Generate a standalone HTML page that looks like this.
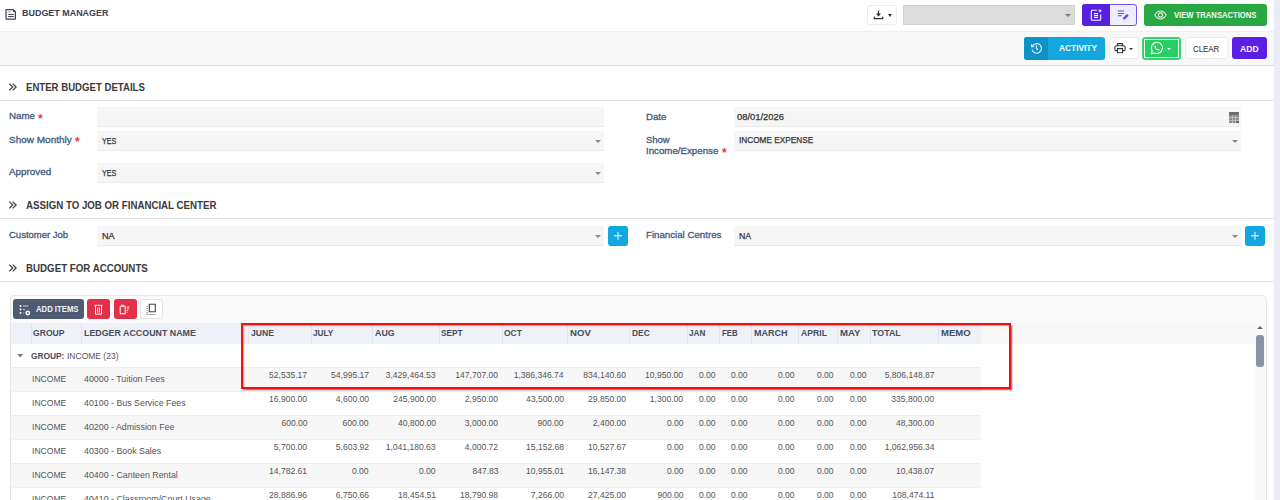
<!DOCTYPE html>
<html><head><meta charset="utf-8"><style>
*{box-sizing:border-box;margin:0;padding:0}
html,body{width:1280px;height:500px;overflow:hidden;background:#fff;font-family:"Liberation Sans",sans-serif;}
.a{position:absolute}
.t{line-height:20px;white-space:nowrap}
.box{position:absolute;border-radius:3px}
.hr{position:absolute;left:0;width:1274px;height:1px;background:#e4e4e4}
.inp{position:absolute;background:#f6f6f6;border-bottom:1px solid #ebebeb}
</style></head><body>
<div class="a" style="left:1274px;top:0;width:6px;height:500px;background:#ebebf5"></div>
<div class="a" style="left:0;top:31px;width:1274px;height:35px;background:#f8f8f8;border-top:1px solid #f0f0f0;border-bottom:1px solid #dcdcdc"></div>
<svg class="a" style="left:2px;top:5px" width="20" height="18" viewBox="2 5 20 18"><path d="M6 9.6H13.3L15.4 11.7V18.5a.7.7 0 0 1-.7.7H6.7a.7.7 0 0 1-.7-.7z" fill="none" stroke="#3d4354" stroke-width="1.2" stroke-linejoin="round"/><path d="M13 9.3L15.7 12H13z" fill="#3d4354"/><path d="M8.2 11.9h2.6" stroke="#9aa0ab" stroke-width="1"/><path d="M8.2 14.4h5.6M8.2 16.5h5.6" stroke="#3d4354" stroke-width="1"/></svg>
<div class="a t" style="left:21.50px;top:2.80px;font-size:9.30px;color:#3d4354;font-weight:bold;transform:scaleX(0.9620);transform-origin:0 50%;">BUDGET MANAGER</div>
<div class="box" style="left:867px;top:5px;width:30px;height:20px;background:#fff;border:1px solid #ebebeb"></div>
<svg class="a" style="left:873px;top:10px" width="11" height="10" viewBox="0 0 11 10"><path d="M5.5 0.6v5.4" stroke="#333" stroke-width="1.3"/><path d="M3 3.6l2.5 2.8 2.5-2.8z" fill="#333"/><path d="M1.3 6.8v1.9h8.4V6.8" fill="none" stroke="#333" stroke-width="1.3"/></svg>
<div class="a" style="left:888px;top:14px;width:0;height:0;border-left:2.7px solid transparent;border-right:2.7px solid transparent;border-top:3px solid #333"></div>
<div class="a" style="left:903px;top:5px;width:172px;height:20px;background:#dcdcdc;border:1px solid #d2d2d2"></div>
<div class="a" style="left:1065.3px;top:13.8px;width:0;height:0;border-left:3.2px solid transparent;border-right:3.2px solid transparent;border-top:3.6px solid #7a7a7a"></div>
<div class="box" style="left:1082px;top:4px;width:55px;height:22px;background:#efecfc;border:1px solid #7452ef"></div>
<div class="box" style="left:1082px;top:4px;width:28px;height:22px;background:#5620e2;border-radius:3px 0 0 3px"></div>
<svg class="a" style="left:1090px;top:8.6px" width="13" height="12" viewBox="0 0 13 12"><path d="M6.8 1.3H2.2a.9.9 0 0 0-.9.9v8.2a.9.9 0 0 0 .9.9h7.6a.9.9 0 0 0 .9-.9V5.6" fill="none" stroke="#fff" stroke-width="1.1"/><path d="M4 4.6h4M4 6.6h4M4 8.5h4" stroke="#fff" stroke-width="1.1"/><path d="M10 .3v3M8.5 1.8h3" stroke="#fff" stroke-width="1"/></svg>
<svg class="a" style="left:1117px;top:10px" width="12" height="10" viewBox="0 0 12 10"><path d="M1 1h6M1 3.5h6M1 5.8h4" stroke="#6a43ee" stroke-width="1.1"/><path d="M7.2 8.4l3-3" stroke="#6a43ee" stroke-width="2.3" stroke-linecap="round"/></svg>
<div class="box" style="left:1144px;top:4px;width:123px;height:22px;background:#27a843"></div>
<svg class="a" style="left:1154px;top:10px" width="13" height="10" viewBox="0 0 13 10"><path d="M.8 5C2.5 2.1 4.4 1 6.5 1s4 1.1 5.7 4c-1.7 2.9-3.6 4-5.7 4S2.5 7.9.8 5z" fill="none" stroke="#e6f5e9" stroke-width="1.1"/><circle cx="6.5" cy="5" r="2.1" fill="none" stroke="#e6f5e9" stroke-width="1.1"/></svg>
<div class="a t" style="left:1174.00px;top:4.80px;font-size:9.01px;color:#f2faf3;font-weight:bold;transform:scaleX(0.8494);transform-origin:0 50%;">VIEW TRANSACTIONS</div>
<div class="box" style="left:1024px;top:37px;width:81px;height:23px;background:#12a7de"></div>
<div class="box" style="left:1024px;top:37px;width:24px;height:23px;background:#0f93c6;border-radius:3px 0 0 3px"></div>
<svg class="a" style="left:1030px;top:42px" width="13" height="12" viewBox="0 0 13 12"><path d="M2.4 4.2A4.8 4.8 0 1 1 2 7.6" fill="none" stroke="#e8f6fb" stroke-width="1.1"/><path d="M1.6 2.2v2.6h2.6" fill="none" stroke="#e8f6fb" stroke-width="1.1"/><path d="M6.4 3.6v2.6l1.6 1.6" fill="none" stroke="#e8f6fb" stroke-width="1.1"/></svg>
<div class="a t" style="left:1059.00px;top:38.00px;font-size:8.72px;color:#f4fbfe;font-weight:bold;transform:scaleX(0.9565);transform-origin:0 50%;">ACTIVITY</div>
<div class="box" style="left:1109px;top:37px;width:30px;height:22px;background:#fff;border:1px solid #ececec"></div>
<svg class="a" style="left:1114px;top:42px" width="12" height="12" viewBox="0 0 12 12"><path d="M3.4 3.6V1.6h5.2v2" fill="none" stroke="#333" stroke-width="1.05"/><path d="M3.2 8.6H1.8a.9.9 0 0 1-.9-.9V5a1.3 1.3 0 0 1 1.3-1.3h7.6A1.3 1.3 0 0 1 11.1 5v2.7a.9.9 0 0 1-.9.9H8.8" fill="none" stroke="#333" stroke-width="1.05"/><path d="M3.4 6.6h5.2v4.2H3.4z" fill="none" stroke="#333" stroke-width="1.05"/></svg>
<div class="a" style="left:1129.2px;top:47.6px;width:0;height:0;border-left:2.4px solid transparent;border-right:2.4px solid transparent;border-top:2.7px solid #333"></div>
<div class="box" style="left:1142px;top:37px;width:39px;height:23px;background:#25d366;border:1.5px solid #41d978;border-radius:3px"></div>
<div class="a" style="left:1144px;top:39px;width:35px;height:19px;border:1px solid #f2fff6;background:#27cf63"></div>
<svg class="a" style="left:1150px;top:41px" width="14" height="14" viewBox="0 0 14 14"><path d="M7 1.3a5.6 5.6 0 0 0-4.8 8.5L1.4 12.7l3-.8A5.6 5.6 0 1 0 7 1.3z" fill="none" stroke="#fff" stroke-width="1.1"/><path d="M5 4.4c-.4.3-.7.8-.5 1.5.4 1.4 1.9 3 3.4 3.6.7.3 1.3 0 1.6-.4l-.2-.7-1.1-.5-.5.5c-.8-.3-1.6-1.1-1.9-1.9l.5-.5-.4-1.1z" fill="#fff"/></svg>
<div class="a" style="left:1167.3px;top:47.8px;width:0;height:0;border-left:2.4px solid transparent;border-right:2.4px solid transparent;border-top:2.7px solid #fff"></div>
<div class="box" style="left:1185px;top:37px;width:43px;height:22px;background:#fff;border:1px solid #ececec"></div>
<div class="a t" style="left:1193.00px;top:38.60px;font-size:9.01px;color:#3d3d3d;font-weight:normal;transform:scaleX(0.8752);transform-origin:0 50%;-webkit-text-stroke:0.1px #3d3d3d">CLEAR</div>
<div class="box" style="left:1232px;top:37px;width:35px;height:22px;background:#5a1fe2"></div>
<div class="a t" style="left:1240.00px;top:38.60px;font-size:9.01px;color:#f5f1fe;font-weight:bold;transform:scaleX(0.9578);transform-origin:0 50%;">ADD</div>
<svg class="a" style="left:0;top:77.2px" width="30" height="20" viewBox="0 77.2 30 20"><path d="M9.3 83.8L12.7 87.2L9.3 90.60000000000001M12.7 83.8L16.1 87.2L12.7 90.60000000000001" fill="none" stroke="#3d3d3d" stroke-width="1.25"/></svg>
<div class="a t" style="left:26.00px;top:78.00px;font-size:10.03px;color:#3a3a3a;font-weight:bold;transform:scaleX(0.9592);transform-origin:0 50%;">ENTER BUDGET DETAILS</div>
<div class="hr" style="top:100px"></div>
<svg class="a" style="left:0;top:194.8px" width="30" height="20" viewBox="0 194.8 30 20"><path d="M9.3 201.4L12.7 204.8L9.3 208.20000000000002M12.7 201.4L16.1 204.8L12.7 208.20000000000002" fill="none" stroke="#3d3d3d" stroke-width="1.25"/></svg>
<div class="a t" style="left:26.00px;top:195.60px;font-size:10.03px;color:#3a3a3a;font-weight:bold;transform:scaleX(0.9686);transform-origin:0 50%;">ASSIGN TO JOB OR FINANCIAL CENTER</div>
<div class="hr" style="top:218px"></div>
<svg class="a" style="left:0;top:257.9px" width="30" height="20" viewBox="0 257.9 30 20"><path d="M9.3 264.5L12.7 267.9L9.3 271.29999999999995M12.7 264.5L16.1 267.9L12.7 271.29999999999995" fill="none" stroke="#3d3d3d" stroke-width="1.25"/></svg>
<div class="a t" style="left:26.00px;top:258.70px;font-size:10.03px;color:#3a3a3a;font-weight:bold;transform:scaleX(0.9718);transform-origin:0 50%;">BUDGET FOR ACCOUNTS</div>
<div class="hr" style="top:281px"></div>
<div class="a t" style="left:9.00px;top:106.40px;font-size:9.74px;color:#405a80;font-weight:normal;transform:scaleX(1.0009);transform-origin:0 50%;-webkit-text-stroke:0.3px #405a80">Name</div>
<div class="a t" style="left:38px;top:108.50px;font-size:12px;color:#e3374b;font-weight:bold">*</div>
<div class="inp" style="left:97px;top:107px;width:507px;height:20px"></div>
<div class="a t" style="left:9.00px;top:129.80px;font-size:9.74px;color:#405a80;font-weight:normal;transform:scaleX(1.0268);transform-origin:0 50%;-webkit-text-stroke:0.3px #405a80">Show Monthly</div>
<div class="a t" style="left:75px;top:131.80px;font-size:12px;color:#e3374b;font-weight:bold">*</div>
<div class="inp" style="left:97px;top:131px;width:507px;height:20px"></div>
<div class="a" style="left:595px;top:139.5px;width:0;height:0;border-left:3.5px solid transparent;border-right:3.5px solid transparent;border-top:3.5px solid #888"></div>
<div class="a t" style="left:101.80px;top:130.50px;font-size:8.72px;color:#333;font-weight:normal;transform:scaleX(0.8251);transform-origin:0 50%;-webkit-text-stroke:0.25px #333">YES</div>
<div class="a t" style="left:9.00px;top:162.00px;font-size:9.74px;color:#405a80;font-weight:normal;transform:scaleX(1.0124);transform-origin:0 50%;-webkit-text-stroke:0.3px #405a80">Approved</div>
<div class="inp" style="left:97px;top:163px;width:507px;height:20px"></div>
<div class="a" style="left:595px;top:171.5px;width:0;height:0;border-left:3.5px solid transparent;border-right:3.5px solid transparent;border-top:3.5px solid #888"></div>
<div class="a t" style="left:101.80px;top:162.80px;font-size:8.72px;color:#333;font-weight:normal;transform:scaleX(0.8251);transform-origin:0 50%;-webkit-text-stroke:0.25px #333">YES</div>
<div class="a t" style="left:646.00px;top:106.50px;font-size:9.74px;color:#405a80;font-weight:normal;transform:scaleX(0.9918);transform-origin:0 50%;-webkit-text-stroke:0.3px #405a80">Date</div>
<div class="inp" style="left:734px;top:107px;width:507px;height:20px"></div>
<div class="a t" style="left:736.50px;top:107.20px;font-size:9.01px;color:#333;font-weight:normal;transform:scaleX(1.0422);transform-origin:0 50%;-webkit-text-stroke:0.25px #333">08/01/2026</div>
<svg class="a" style="left:1229px;top:112px" width="10" height="11" viewBox="0 0 10 11"><rect x="0" y="0" width="10" height="11" fill="#8a8a8a"/><rect x="0" y="0" width="10" height="3" fill="#6e6e6e"/><path d="M0 5.5h10M0 8.5h10M3.5 3v8M6.5 3v8" stroke="#c8c8c8" stroke-width="0.8"/><rect x="7" y="9" width="3" height="2" fill="#666"/></svg>
<div class="a t" style="left:646.00px;top:129.70px;font-size:9.74px;color:#405a80;font-weight:normal;transform:scaleX(0.9729);transform-origin:0 50%;-webkit-text-stroke:0.3px #405a80">Show</div>
<div class="a t" style="left:646.00px;top:141.00px;font-size:9.74px;color:#405a80;font-weight:normal;transform:scaleX(0.9968);transform-origin:0 50%;-webkit-text-stroke:0.3px #405a80">Income/Expense</div>
<div class="a t" style="left:722px;top:143.00px;font-size:12px;color:#e3374b;font-weight:bold">*</div>
<div class="inp" style="left:734px;top:131px;width:507px;height:20px"></div>
<div class="a" style="left:1232px;top:139.5px;width:0;height:0;border-left:3.5px solid transparent;border-right:3.5px solid transparent;border-top:3.5px solid #888"></div>
<div class="a t" style="left:738.80px;top:130.20px;font-size:8.72px;color:#333;font-weight:normal;transform:scaleX(0.9451);transform-origin:0 50%;-webkit-text-stroke:0.25px #333">INCOME EXPENSE</div>
<div class="a t" style="left:9.20px;top:224.70px;font-size:9.74px;color:#405a80;font-weight:normal;transform:scaleX(0.9750);transform-origin:0 50%;-webkit-text-stroke:0.3px #405a80">Customer Job</div>
<div class="inp" style="left:97px;top:226px;width:507px;height:20px"></div>
<div class="a" style="left:595px;top:234.5px;width:0;height:0;border-left:3.5px solid transparent;border-right:3.5px solid transparent;border-top:3.5px solid #888"></div>
<div class="a t" style="left:101.50px;top:226.00px;font-size:8.72px;color:#333;font-weight:normal;transform:scaleX(1.0483);transform-origin:0 50%;-webkit-text-stroke:0.25px #333">NA</div>
<div class="a t" style="left:646.10px;top:224.70px;font-size:9.74px;color:#405a80;font-weight:normal;transform:scaleX(0.9951);transform-origin:0 50%;-webkit-text-stroke:0.3px #405a80">Financial Centres</div>
<div class="inp" style="left:734px;top:226px;width:507px;height:20px"></div>
<div class="a" style="left:1232px;top:234.5px;width:0;height:0;border-left:3.5px solid transparent;border-right:3.5px solid transparent;border-top:3.5px solid #888"></div>
<div class="a t" style="left:738.90px;top:226.00px;font-size:8.72px;color:#333;font-weight:normal;transform:scaleX(1.0070);transform-origin:0 50%;-webkit-text-stroke:0.25px #333">NA</div>
<div class="box" style="left:608px;top:226px;width:20px;height:20px;background:#12a7e0"></div>
<svg class="a" style="left:608px;top:226px" width="20" height="20" viewBox="0 0 20 20"><path d="M10 5.8v8M6 9.8h8" stroke="#fff" stroke-width="1"/></svg>
<div class="box" style="left:1245px;top:226px;width:20px;height:20px;background:#12a7e0"></div>
<svg class="a" style="left:1245px;top:226px" width="20" height="20" viewBox="0 0 20 20"><path d="M10 5.8v8M6 9.8h8" stroke="#fff" stroke-width="1"/></svg>
<div class="a" style="left:10px;top:295px;width:1257px;height:230px;background:#fff;border:1px solid #e6e6e6;border-radius:4px"></div>
<div class="a" style="left:11px;top:296px;width:1255px;height:27px;background:#fafafa;border-radius:4px 4px 0 0"></div>
<div class="a" style="left:981px;top:323px;width:285px;height:21px;background:#f8f8f8"></div>
<div class="a" style="left:1255px;top:323px;width:11px;height:190px;background:#f8f8f8"></div>
<div class="a" style="left:1256px;top:335px;width:8px;height:32px;background:#8992a6;border-radius:3px"></div>
<div class="a" style="left:1257px;top:326px;width:0;height:0;border-left:3px solid transparent;border-right:3px solid transparent;border-bottom:3.5px solid #666"></div>
<div class="box" style="left:13px;top:299px;width:71px;height:20px;background:#4f5b73"></div>
<svg class="a" style="left:18px;top:303px" width="14" height="13" viewBox="0 0 14 13"><g fill="#fff"><circle cx="2.5" cy="3" r="1"/><circle cx="2.5" cy="6.6" r="1"/><circle cx="2.5" cy="10" r="1"/></g><path d="M5 3h5.5M5 6.6h2M5 10h.6" stroke="#e8eaef" stroke-width="0.8"/><circle cx="9.8" cy="10" r="2.4" fill="#fff"/><circle cx="9.8" cy="10" r="0.9" fill="#4f5b73"/></svg>
<div class="a t" style="left:35.70px;top:299.20px;font-size:8.43px;color:#f3f4f6;font-weight:bold;transform:scaleX(0.9166);transform-origin:0 50%;">ADD ITEMS</div>
<div class="box" style="left:87px;top:299px;width:23px;height:20px;background:#e3304a"></div>
<svg class="a" style="left:94px;top:304px" width="9" height="11" viewBox="0 0 9 11"><path d="M.5 1.3h8" stroke="#fff" stroke-width="1"/><path d="M1.5 1.6v8.6h6V1.6" fill="none" stroke="#fff" stroke-width="1"/><path d="M3.6 3.5v5M5.4 3.5v5" stroke="#fff" stroke-width="1"/></svg>
<div class="box" style="left:114px;top:299px;width:23px;height:20px;background:#e3304a"></div>
<svg class="a" style="left:119px;top:304px" width="12" height="11" viewBox="0 0 12 11"><path d="M1.2 2.2h5v7.6h-5z" fill="none" stroke="#fff" stroke-width="1"/><path d="M2.6 1.2h2.2" stroke="#fff" stroke-width="1"/><path d="M7.8 3h2.6M7.8 4.8h2M7.8 6.6h1.4M7.8 8.4h.8" stroke="#fff" stroke-width=".9"/></svg>
<div class="box" style="left:140px;top:299px;width:23px;height:20px;background:#fff;border:1px solid #e4e4e4"></div>
<svg class="a" style="left:145px;top:303px" width="13" height="13" viewBox="0 0 13 13"><path d="M4.3 1.3h6v7.4h-6z" fill="none" stroke="#444" stroke-width="1.1"/><g fill="#666"><rect x="1.6" y="3" width="1" height="1"/><rect x="1.6" y="5" width="1" height="1"/><rect x="1.6" y="7" width="1" height="1"/><rect x="1.6" y="9" width="1" height="1"/><rect x="1.6" y="11" width="1" height="1"/><rect x="3.6" y="11" width="1" height="1"/><rect x="5.6" y="11" width="1" height="1"/><rect x="7.6" y="11" width="1" height="1"/><rect x="9.6" y="11" width="1" height="1"/></g></svg>
<div class="a" style="left:11px;top:323px;width:970px;height:21px;background:#eef1f7"></div>
<div class="a" style="left:30.5px;top:323px;width:1px;height:21px;background:#e0e4ec"></div>
<div class="a t" style="left:33.30px;top:323.30px;font-size:9.45px;color:#474d5c;font-weight:bold;transform:scaleX(0.9107);transform-origin:0 50%;">GROUP</div>
<div class="a" style="left:81.3px;top:323px;width:1px;height:21px;background:#e0e4ec"></div>
<div class="a t" style="left:84.00px;top:323.30px;font-size:9.45px;color:#474d5c;font-weight:bold;transform:scaleX(0.9387);transform-origin:0 50%;">LEDGER ACCOUNT NAME</div>
<div class="a" style="left:247.7px;top:323px;width:1px;height:21px;background:#e0e4ec"></div>
<div class="a t" style="left:250.80px;top:323.30px;font-size:9.45px;color:#474d5c;font-weight:bold;transform:scaleX(0.9107);transform-origin:0 50%;">JUNE</div>
<div class="a" style="left:310.6px;top:323px;width:1px;height:21px;background:#e0e4ec"></div>
<div class="a t" style="left:313.10px;top:323.30px;font-size:9.45px;color:#474d5c;font-weight:bold;transform:scaleX(0.8719);transform-origin:0 50%;">JULY</div>
<div class="a" style="left:372.4px;top:323px;width:1px;height:21px;background:#e0e4ec"></div>
<div class="a t" style="left:374.70px;top:323.30px;font-size:9.45px;color:#474d5c;font-weight:bold;transform:scaleX(0.9383);transform-origin:0 50%;">AUG</div>
<div class="a" style="left:439.2px;top:323px;width:1px;height:21px;background:#e0e4ec"></div>
<div class="a t" style="left:441.25px;top:323.30px;font-size:9.45px;color:#474d5c;font-weight:bold;transform:scaleX(0.8733);transform-origin:0 50%;">SEPT</div>
<div class="a" style="left:501.8px;top:323px;width:1px;height:21px;background:#e0e4ec"></div>
<div class="a t" style="left:503.75px;top:323.30px;font-size:9.45px;color:#474d5c;font-weight:bold;transform:scaleX(0.8951);transform-origin:0 50%;">OCT</div>
<div class="a" style="left:567.3px;top:323px;width:1px;height:21px;background:#e0e4ec"></div>
<div class="a t" style="left:570.00px;top:323.30px;font-size:9.45px;color:#474d5c;font-weight:bold;transform:scaleX(1.0208);transform-origin:0 50%;">NOV</div>
<div class="a" style="left:629.4px;top:323px;width:1px;height:21px;background:#e0e4ec"></div>
<div class="a t" style="left:632.20px;top:323.30px;font-size:9.45px;color:#474d5c;font-weight:bold;transform:scaleX(0.8923);transform-origin:0 50%;">DEC</div>
<div class="a" style="left:687.0px;top:323px;width:1px;height:21px;background:#e0e4ec"></div>
<div class="a t" style="left:689.20px;top:323.30px;font-size:9.45px;color:#474d5c;font-weight:bold;transform:scaleX(0.8677);transform-origin:0 50%;">JAN</div>
<div class="a" style="left:718.7px;top:323px;width:1px;height:21px;background:#e0e4ec"></div>
<div class="a t" style="left:721.50px;top:323.30px;font-size:9.45px;color:#474d5c;font-weight:bold;transform:scaleX(0.8256);transform-origin:0 50%;">FEB</div>
<div class="a" style="left:750.6px;top:323px;width:1px;height:21px;background:#e0e4ec"></div>
<div class="a t" style="left:753.50px;top:323.30px;font-size:9.45px;color:#474d5c;font-weight:bold;transform:scaleX(0.9556);transform-origin:0 50%;">MARCH</div>
<div class="a" style="left:797.8px;top:323px;width:1px;height:21px;background:#e0e4ec"></div>
<div class="a t" style="left:800.50px;top:323.30px;font-size:9.45px;color:#474d5c;font-weight:bold;transform:scaleX(0.9173);transform-origin:0 50%;">APRIL</div>
<div class="a" style="left:837.3px;top:323px;width:1px;height:21px;background:#e0e4ec"></div>
<div class="a t" style="left:839.60px;top:323.30px;font-size:9.45px;color:#474d5c;font-weight:bold;transform:scaleX(1.0185);transform-origin:0 50%;">MAY</div>
<div class="a" style="left:869.6px;top:323px;width:1px;height:21px;background:#e0e4ec"></div>
<div class="a t" style="left:871.90px;top:323.30px;font-size:9.45px;color:#474d5c;font-weight:bold;transform:scaleX(0.9376);transform-origin:0 50%;">TOTAL</div>
<div class="a" style="left:938.0px;top:323px;width:1px;height:21px;background:#e0e4ec"></div>
<div class="a t" style="left:941.30px;top:323.30px;font-size:9.45px;color:#474d5c;font-weight:bold;transform:scaleX(1.0072);transform-origin:0 50%;">MEMO</div>
<svg class="a" style="left:10px;top:345px" width="20" height="20" viewBox="10 345 20 20"><path d="M17.2 353.9H23.2L20.2 357.4z" fill="#7a7a7a"/></svg>
<div class="a t" style="left:30.60px;top:346.10px;font-size:8.72px;color:#474d5c;font-weight:bold;transform:scaleX(0.9546);transform-origin:0 50%;">GROUP:</div>
<div class="a t" style="left:66.70px;top:346.10px;font-size:8.72px;color:#555;font-weight:normal;transform:scaleX(0.9751);transform-origin:0 50%;">INCOME (23)</div>
<div class="a" style="left:11px;top:367px;width:970px;height:24px;background:#f7f7f7;border-top:1px solid #efefef"></div>
<div class="a t" style="left:32.40px;top:369.00px;font-size:9.01px;color:#555;font-weight:normal;transform:scaleX(0.9515);transform-origin:0 50%;">INCOME</div>
<div class="a t" style="left:83.50px;top:369.00px;font-size:9.16px;color:#555;font-weight:normal;transform:scaleX(0.9650);transform-origin:0 50%;">40000 - Tuition Fees</div>
<div class="a t" style="left:267.01px;top:365.00px;width:40.09px;text-align:right;font-size:9.01px;color:#555;font-weight:normal;transform:scaleX(0.9500);transform-origin:100% 50%;">52,535.17</div>
<div class="a t" style="left:328.81px;top:365.00px;width:40.09px;text-align:right;font-size:9.01px;color:#555;font-weight:normal;transform:scaleX(0.9500);transform-origin:100% 50%;">54,995.17</div>
<div class="a t" style="left:383.09px;top:365.00px;width:52.61px;text-align:right;font-size:9.01px;color:#555;font-weight:normal;transform:scaleX(0.9500);transform-origin:100% 50%;">3,429,464.53</div>
<div class="a t" style="left:453.20px;top:365.00px;width:45.10px;text-align:right;font-size:9.01px;color:#555;font-weight:normal;transform:scaleX(0.9500);transform-origin:100% 50%;">147,707.00</div>
<div class="a t" style="left:511.19px;top:365.00px;width:52.61px;text-align:right;font-size:9.01px;color:#555;font-weight:normal;transform:scaleX(0.9500);transform-origin:100% 50%;">1,386,346.74</div>
<div class="a t" style="left:580.80px;top:365.00px;width:45.10px;text-align:right;font-size:9.01px;color:#555;font-weight:normal;transform:scaleX(0.9500);transform-origin:100% 50%;">834,140.60</div>
<div class="a t" style="left:643.41px;top:365.00px;width:40.09px;text-align:right;font-size:9.01px;color:#555;font-weight:normal;transform:scaleX(0.9500);transform-origin:100% 50%;">10,950.00</div>
<div class="a t" style="left:697.66px;top:365.00px;width:17.54px;text-align:right;font-size:9.01px;color:#555;font-weight:normal;transform:scaleX(0.9500);transform-origin:100% 50%;">0.00</div>
<div class="a t" style="left:729.56px;top:365.00px;width:17.54px;text-align:right;font-size:9.01px;color:#555;font-weight:normal;transform:scaleX(0.9500);transform-origin:100% 50%;">0.00</div>
<div class="a t" style="left:776.76px;top:365.00px;width:17.54px;text-align:right;font-size:9.01px;color:#555;font-weight:normal;transform:scaleX(0.9500);transform-origin:100% 50%;">0.00</div>
<div class="a t" style="left:816.26px;top:365.00px;width:17.54px;text-align:right;font-size:9.01px;color:#555;font-weight:normal;transform:scaleX(0.9500);transform-origin:100% 50%;">0.00</div>
<div class="a t" style="left:848.56px;top:365.00px;width:17.54px;text-align:right;font-size:9.01px;color:#555;font-weight:normal;transform:scaleX(0.9500);transform-origin:100% 50%;">0.00</div>
<div class="a t" style="left:881.89px;top:365.00px;width:52.61px;text-align:right;font-size:9.01px;color:#555;font-weight:normal;transform:scaleX(0.9500);transform-origin:100% 50%;">5,806,148.87</div>
<div class="a" style="left:11px;top:391px;width:970px;height:24px;background:#fff;border-top:1px solid #efefef"></div>
<div class="a t" style="left:32.40px;top:393.00px;font-size:9.01px;color:#555;font-weight:normal;transform:scaleX(0.9515);transform-origin:0 50%;">INCOME</div>
<div class="a t" style="left:83.50px;top:393.00px;font-size:9.16px;color:#555;font-weight:normal;transform:scaleX(0.9650);transform-origin:0 50%;">40100 - Bus Service Fees</div>
<div class="a t" style="left:267.01px;top:389.00px;width:40.09px;text-align:right;font-size:9.01px;color:#555;font-weight:normal;transform:scaleX(0.9500);transform-origin:100% 50%;">16,900.00</div>
<div class="a t" style="left:333.83px;top:389.00px;width:35.07px;text-align:right;font-size:9.01px;color:#555;font-weight:normal;transform:scaleX(0.9500);transform-origin:100% 50%;">4,600.00</div>
<div class="a t" style="left:390.60px;top:389.00px;width:45.10px;text-align:right;font-size:9.01px;color:#555;font-weight:normal;transform:scaleX(0.9500);transform-origin:100% 50%;">245,900.00</div>
<div class="a t" style="left:463.23px;top:389.00px;width:35.07px;text-align:right;font-size:9.01px;color:#555;font-weight:normal;transform:scaleX(0.9500);transform-origin:100% 50%;">2,950.00</div>
<div class="a t" style="left:523.71px;top:389.00px;width:40.09px;text-align:right;font-size:9.01px;color:#555;font-weight:normal;transform:scaleX(0.9500);transform-origin:100% 50%;">43,500.00</div>
<div class="a t" style="left:585.81px;top:389.00px;width:40.09px;text-align:right;font-size:9.01px;color:#555;font-weight:normal;transform:scaleX(0.9500);transform-origin:100% 50%;">29,850.00</div>
<div class="a t" style="left:648.43px;top:389.00px;width:35.07px;text-align:right;font-size:9.01px;color:#555;font-weight:normal;transform:scaleX(0.9500);transform-origin:100% 50%;">1,300.00</div>
<div class="a t" style="left:697.66px;top:389.00px;width:17.54px;text-align:right;font-size:9.01px;color:#555;font-weight:normal;transform:scaleX(0.9500);transform-origin:100% 50%;">0.00</div>
<div class="a t" style="left:729.56px;top:389.00px;width:17.54px;text-align:right;font-size:9.01px;color:#555;font-weight:normal;transform:scaleX(0.9500);transform-origin:100% 50%;">0.00</div>
<div class="a t" style="left:776.76px;top:389.00px;width:17.54px;text-align:right;font-size:9.01px;color:#555;font-weight:normal;transform:scaleX(0.9500);transform-origin:100% 50%;">0.00</div>
<div class="a t" style="left:816.26px;top:389.00px;width:17.54px;text-align:right;font-size:9.01px;color:#555;font-weight:normal;transform:scaleX(0.9500);transform-origin:100% 50%;">0.00</div>
<div class="a t" style="left:848.56px;top:389.00px;width:17.54px;text-align:right;font-size:9.01px;color:#555;font-weight:normal;transform:scaleX(0.9500);transform-origin:100% 50%;">0.00</div>
<div class="a t" style="left:889.40px;top:389.00px;width:45.10px;text-align:right;font-size:9.01px;color:#555;font-weight:normal;transform:scaleX(0.9500);transform-origin:100% 50%;">335,800.00</div>
<div class="a" style="left:11px;top:415px;width:970px;height:24px;background:#f7f7f7;border-top:1px solid #efefef"></div>
<div class="a t" style="left:32.40px;top:417.00px;font-size:9.01px;color:#555;font-weight:normal;transform:scaleX(0.9515);transform-origin:0 50%;">INCOME</div>
<div class="a t" style="left:83.50px;top:417.00px;font-size:9.16px;color:#555;font-weight:normal;transform:scaleX(0.9650);transform-origin:0 50%;">40200 - Admission Fee</div>
<div class="a t" style="left:279.54px;top:413.00px;width:27.56px;text-align:right;font-size:9.01px;color:#555;font-weight:normal;transform:scaleX(0.9500);transform-origin:100% 50%;">600.00</div>
<div class="a t" style="left:341.34px;top:413.00px;width:27.56px;text-align:right;font-size:9.01px;color:#555;font-weight:normal;transform:scaleX(0.9500);transform-origin:100% 50%;">600.00</div>
<div class="a t" style="left:395.61px;top:413.00px;width:40.09px;text-align:right;font-size:9.01px;color:#555;font-weight:normal;transform:scaleX(0.9500);transform-origin:100% 50%;">40,800.00</div>
<div class="a t" style="left:463.23px;top:413.00px;width:35.07px;text-align:right;font-size:9.01px;color:#555;font-weight:normal;transform:scaleX(0.9500);transform-origin:100% 50%;">3,000.00</div>
<div class="a t" style="left:536.24px;top:413.00px;width:27.56px;text-align:right;font-size:9.01px;color:#555;font-weight:normal;transform:scaleX(0.9500);transform-origin:100% 50%;">900.00</div>
<div class="a t" style="left:590.83px;top:413.00px;width:35.07px;text-align:right;font-size:9.01px;color:#555;font-weight:normal;transform:scaleX(0.9500);transform-origin:100% 50%;">2,400.00</div>
<div class="a t" style="left:665.96px;top:413.00px;width:17.54px;text-align:right;font-size:9.01px;color:#555;font-weight:normal;transform:scaleX(0.9500);transform-origin:100% 50%;">0.00</div>
<div class="a t" style="left:697.66px;top:413.00px;width:17.54px;text-align:right;font-size:9.01px;color:#555;font-weight:normal;transform:scaleX(0.9500);transform-origin:100% 50%;">0.00</div>
<div class="a t" style="left:729.56px;top:413.00px;width:17.54px;text-align:right;font-size:9.01px;color:#555;font-weight:normal;transform:scaleX(0.9500);transform-origin:100% 50%;">0.00</div>
<div class="a t" style="left:776.76px;top:413.00px;width:17.54px;text-align:right;font-size:9.01px;color:#555;font-weight:normal;transform:scaleX(0.9500);transform-origin:100% 50%;">0.00</div>
<div class="a t" style="left:816.26px;top:413.00px;width:17.54px;text-align:right;font-size:9.01px;color:#555;font-weight:normal;transform:scaleX(0.9500);transform-origin:100% 50%;">0.00</div>
<div class="a t" style="left:848.56px;top:413.00px;width:17.54px;text-align:right;font-size:9.01px;color:#555;font-weight:normal;transform:scaleX(0.9500);transform-origin:100% 50%;">0.00</div>
<div class="a t" style="left:894.41px;top:413.00px;width:40.09px;text-align:right;font-size:9.01px;color:#555;font-weight:normal;transform:scaleX(0.9500);transform-origin:100% 50%;">48,300.00</div>
<div class="a" style="left:11px;top:439px;width:970px;height:24px;background:#fff;border-top:1px solid #efefef"></div>
<div class="a t" style="left:32.40px;top:441.00px;font-size:9.01px;color:#555;font-weight:normal;transform:scaleX(0.9515);transform-origin:0 50%;">INCOME</div>
<div class="a t" style="left:83.50px;top:441.00px;font-size:9.16px;color:#555;font-weight:normal;transform:scaleX(0.9650);transform-origin:0 50%;">40300 - Book Sales</div>
<div class="a t" style="left:272.03px;top:437.00px;width:35.07px;text-align:right;font-size:9.01px;color:#555;font-weight:normal;transform:scaleX(0.9500);transform-origin:100% 50%;">5,700.00</div>
<div class="a t" style="left:333.83px;top:437.00px;width:35.07px;text-align:right;font-size:9.01px;color:#555;font-weight:normal;transform:scaleX(0.9500);transform-origin:100% 50%;">5,603.92</div>
<div class="a t" style="left:383.09px;top:437.00px;width:52.61px;text-align:right;font-size:9.01px;color:#555;font-weight:normal;transform:scaleX(0.9500);transform-origin:100% 50%;">1,041,180.63</div>
<div class="a t" style="left:463.23px;top:437.00px;width:35.07px;text-align:right;font-size:9.01px;color:#555;font-weight:normal;transform:scaleX(0.9500);transform-origin:100% 50%;">4,000.72</div>
<div class="a t" style="left:523.71px;top:437.00px;width:40.09px;text-align:right;font-size:9.01px;color:#555;font-weight:normal;transform:scaleX(0.9500);transform-origin:100% 50%;">15,152.68</div>
<div class="a t" style="left:585.81px;top:437.00px;width:40.09px;text-align:right;font-size:9.01px;color:#555;font-weight:normal;transform:scaleX(0.9500);transform-origin:100% 50%;">10,527.67</div>
<div class="a t" style="left:665.96px;top:437.00px;width:17.54px;text-align:right;font-size:9.01px;color:#555;font-weight:normal;transform:scaleX(0.9500);transform-origin:100% 50%;">0.00</div>
<div class="a t" style="left:697.66px;top:437.00px;width:17.54px;text-align:right;font-size:9.01px;color:#555;font-weight:normal;transform:scaleX(0.9500);transform-origin:100% 50%;">0.00</div>
<div class="a t" style="left:729.56px;top:437.00px;width:17.54px;text-align:right;font-size:9.01px;color:#555;font-weight:normal;transform:scaleX(0.9500);transform-origin:100% 50%;">0.00</div>
<div class="a t" style="left:776.76px;top:437.00px;width:17.54px;text-align:right;font-size:9.01px;color:#555;font-weight:normal;transform:scaleX(0.9500);transform-origin:100% 50%;">0.00</div>
<div class="a t" style="left:816.26px;top:437.00px;width:17.54px;text-align:right;font-size:9.01px;color:#555;font-weight:normal;transform:scaleX(0.9500);transform-origin:100% 50%;">0.00</div>
<div class="a t" style="left:848.56px;top:437.00px;width:17.54px;text-align:right;font-size:9.01px;color:#555;font-weight:normal;transform:scaleX(0.9500);transform-origin:100% 50%;">0.00</div>
<div class="a t" style="left:881.89px;top:437.00px;width:52.61px;text-align:right;font-size:9.01px;color:#555;font-weight:normal;transform:scaleX(0.9500);transform-origin:100% 50%;">1,062,956.34</div>
<div class="a" style="left:11px;top:463px;width:970px;height:24px;background:#f7f7f7;border-top:1px solid #efefef"></div>
<div class="a t" style="left:32.40px;top:465.00px;font-size:9.01px;color:#555;font-weight:normal;transform:scaleX(0.9515);transform-origin:0 50%;">INCOME</div>
<div class="a t" style="left:83.50px;top:465.00px;font-size:9.16px;color:#555;font-weight:normal;transform:scaleX(0.9650);transform-origin:0 50%;">40400 - Canteen Rental</div>
<div class="a t" style="left:267.01px;top:461.00px;width:40.09px;text-align:right;font-size:9.01px;color:#555;font-weight:normal;transform:scaleX(0.9500);transform-origin:100% 50%;">14,782.61</div>
<div class="a t" style="left:351.36px;top:461.00px;width:17.54px;text-align:right;font-size:9.01px;color:#555;font-weight:normal;transform:scaleX(0.9500);transform-origin:100% 50%;">0.00</div>
<div class="a t" style="left:418.16px;top:461.00px;width:17.54px;text-align:right;font-size:9.01px;color:#555;font-weight:normal;transform:scaleX(0.9500);transform-origin:100% 50%;">0.00</div>
<div class="a t" style="left:470.74px;top:461.00px;width:27.56px;text-align:right;font-size:9.01px;color:#555;font-weight:normal;transform:scaleX(0.9500);transform-origin:100% 50%;">847.83</div>
<div class="a t" style="left:523.71px;top:461.00px;width:40.09px;text-align:right;font-size:9.01px;color:#555;font-weight:normal;transform:scaleX(0.9500);transform-origin:100% 50%;">10,955.01</div>
<div class="a t" style="left:585.81px;top:461.00px;width:40.09px;text-align:right;font-size:9.01px;color:#555;font-weight:normal;transform:scaleX(0.9500);transform-origin:100% 50%;">16,147.38</div>
<div class="a t" style="left:665.96px;top:461.00px;width:17.54px;text-align:right;font-size:9.01px;color:#555;font-weight:normal;transform:scaleX(0.9500);transform-origin:100% 50%;">0.00</div>
<div class="a t" style="left:697.66px;top:461.00px;width:17.54px;text-align:right;font-size:9.01px;color:#555;font-weight:normal;transform:scaleX(0.9500);transform-origin:100% 50%;">0.00</div>
<div class="a t" style="left:729.56px;top:461.00px;width:17.54px;text-align:right;font-size:9.01px;color:#555;font-weight:normal;transform:scaleX(0.9500);transform-origin:100% 50%;">0.00</div>
<div class="a t" style="left:776.76px;top:461.00px;width:17.54px;text-align:right;font-size:9.01px;color:#555;font-weight:normal;transform:scaleX(0.9500);transform-origin:100% 50%;">0.00</div>
<div class="a t" style="left:816.26px;top:461.00px;width:17.54px;text-align:right;font-size:9.01px;color:#555;font-weight:normal;transform:scaleX(0.9500);transform-origin:100% 50%;">0.00</div>
<div class="a t" style="left:848.56px;top:461.00px;width:17.54px;text-align:right;font-size:9.01px;color:#555;font-weight:normal;transform:scaleX(0.9500);transform-origin:100% 50%;">0.00</div>
<div class="a t" style="left:894.41px;top:461.00px;width:40.09px;text-align:right;font-size:9.01px;color:#555;font-weight:normal;transform:scaleX(0.9500);transform-origin:100% 50%;">10,438.07</div>
<div class="a" style="left:11px;top:487px;width:970px;height:24px;background:#fff;border-top:1px solid #efefef"></div>
<div class="a t" style="left:32.40px;top:489.00px;font-size:9.01px;color:#555;font-weight:normal;transform:scaleX(0.9515);transform-origin:0 50%;">INCOME</div>
<div class="a t" style="left:83.50px;top:489.00px;font-size:9.16px;color:#555;font-weight:normal;transform:scaleX(0.9650);transform-origin:0 50%;">40410 - Classroom/Court Usage</div>
<div class="a t" style="left:267.01px;top:485.00px;width:40.09px;text-align:right;font-size:9.01px;color:#555;font-weight:normal;transform:scaleX(0.9500);transform-origin:100% 50%;">28,886.96</div>
<div class="a t" style="left:333.83px;top:485.00px;width:35.07px;text-align:right;font-size:9.01px;color:#555;font-weight:normal;transform:scaleX(0.9500);transform-origin:100% 50%;">6,750.66</div>
<div class="a t" style="left:395.61px;top:485.00px;width:40.09px;text-align:right;font-size:9.01px;color:#555;font-weight:normal;transform:scaleX(0.9500);transform-origin:100% 50%;">18,454.51</div>
<div class="a t" style="left:458.21px;top:485.00px;width:40.09px;text-align:right;font-size:9.01px;color:#555;font-weight:normal;transform:scaleX(0.9500);transform-origin:100% 50%;">18,790.98</div>
<div class="a t" style="left:528.73px;top:485.00px;width:35.07px;text-align:right;font-size:9.01px;color:#555;font-weight:normal;transform:scaleX(0.9500);transform-origin:100% 50%;">7,266.00</div>
<div class="a t" style="left:585.81px;top:485.00px;width:40.09px;text-align:right;font-size:9.01px;color:#555;font-weight:normal;transform:scaleX(0.9500);transform-origin:100% 50%;">27,425.00</div>
<div class="a t" style="left:655.94px;top:485.00px;width:27.56px;text-align:right;font-size:9.01px;color:#555;font-weight:normal;transform:scaleX(0.9500);transform-origin:100% 50%;">900.00</div>
<div class="a t" style="left:697.66px;top:485.00px;width:17.54px;text-align:right;font-size:9.01px;color:#555;font-weight:normal;transform:scaleX(0.9500);transform-origin:100% 50%;">0.00</div>
<div class="a t" style="left:729.56px;top:485.00px;width:17.54px;text-align:right;font-size:9.01px;color:#555;font-weight:normal;transform:scaleX(0.9500);transform-origin:100% 50%;">0.00</div>
<div class="a t" style="left:776.76px;top:485.00px;width:17.54px;text-align:right;font-size:9.01px;color:#555;font-weight:normal;transform:scaleX(0.9500);transform-origin:100% 50%;">0.00</div>
<div class="a t" style="left:816.26px;top:485.00px;width:17.54px;text-align:right;font-size:9.01px;color:#555;font-weight:normal;transform:scaleX(0.9500);transform-origin:100% 50%;">0.00</div>
<div class="a t" style="left:848.56px;top:485.00px;width:17.54px;text-align:right;font-size:9.01px;color:#555;font-weight:normal;transform:scaleX(0.9500);transform-origin:100% 50%;">0.00</div>
<div class="a t" style="left:890.07px;top:485.00px;width:44.43px;text-align:right;font-size:9.01px;color:#555;font-weight:normal;transform:scaleX(0.9500);transform-origin:100% 50%;">108,474.11</div>
<div class="a" style="left:241px;top:323px;width:770px;height:66px;border:2px solid #fc0d0d;box-shadow:1.5px 1.5px 1.5px rgba(0,0,0,.45), inset 1px 1px 1.5px rgba(0,0,0,.3)"></div>
</body></html>
